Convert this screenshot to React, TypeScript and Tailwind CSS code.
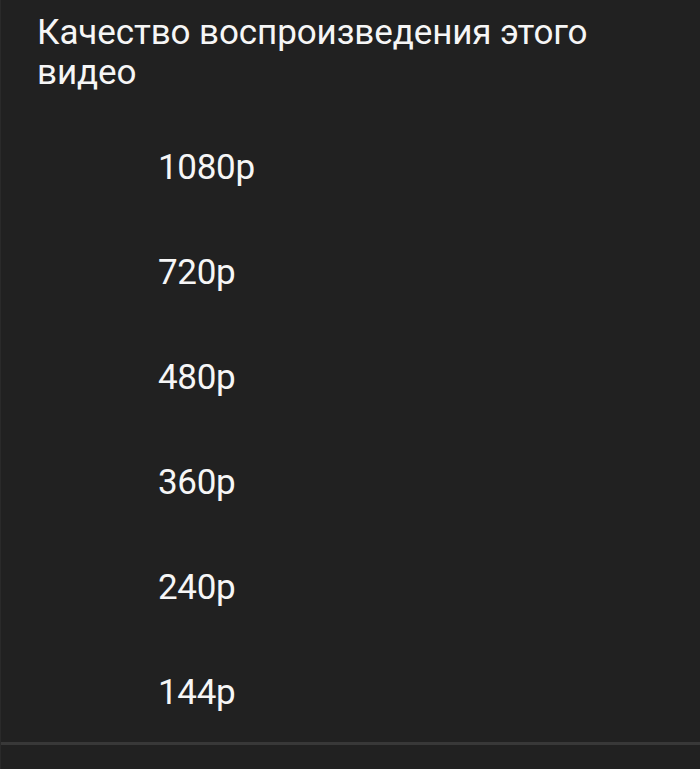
export default function App() {
  const qualities = ["1080p", "720p", "480p", "360p", "240p", "144p"];

  return (
    <div className="w-[700px] h-[769px] bg-[#212121] border-l border-[#2a2a2a] text-[#f6f6f6] overflow-hidden flex flex-col" style={{ fontFamily: "Roboto, 'Noto Sans', sans-serif" }}>
      {/* Header */}
      <div className="pl-[36px] pr-[36px] pt-[13px] text-[35px] leading-[40px] tracking-[-0.1px]">
        Качество воспроизведения этого видео
      </div>

      {/* Quality list */}
      <div className="flex flex-col mt-[22px]">
        {qualities.map((q) => (
          <div key={q} className="h-[105px] flex items-center pl-[157px] text-[35px] leading-[41px] tracking-[-0.3px]">
            {q}
          </div>
        ))}
      </div>

      <div className="h-[3px] bg-[#383838] -mt-[3px]" />
    </div>
  );
}
